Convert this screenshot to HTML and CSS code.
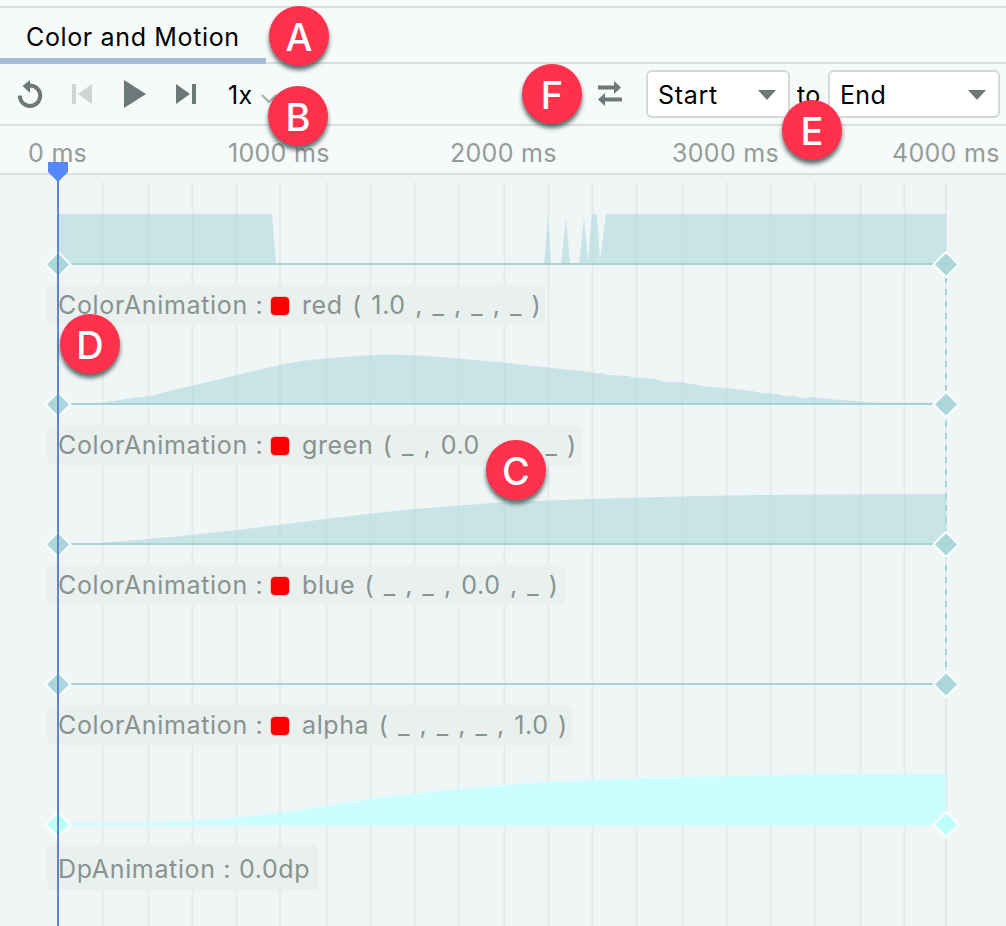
FILE: index.html
```html
<!DOCTYPE html>
<html lang="en">
<head>
    <meta charset="UTF-8">
    <meta name="viewport" content="width=device-width, initial-scale=1.0">
    <title>Animation Preview</title>
    <link rel="stylesheet" href="styles.css">
</head>
<body>
<div class="preview">
    <div class="tabs">
        <div class="tab active"><span class="tab-name">Color and Motion</span></div>
    </div>

    <div class="toolbar">
        <svg class="icon-loop" width="26" height="28" viewBox="0 0 26 28">
            <path d="M2.800 15.500A10.200 10.200 0 1 0 13 5.500" fill="none" stroke="#6c7978" stroke-width="4"/>
            <path d="M13 0v13L5.500 6z" fill="#6c7978"/>
        </svg>
        <svg class="icon-first" width="22" height="22" viewBox="0 0 22 22">
            <path d="M1 1h4v20H1zM21 1v20L7 11z" fill="#cfd5d4"/>
        </svg>
        <svg class="icon-play" width="22" height="28" viewBox="0 0 22 28">
            <path d="M0 0l22 14L0 28z" fill="#6c7978"/>
        </svg>
        <svg class="icon-last" width="20" height="20" viewBox="0 0 20 20">
            <path d="M0 0l14 10L0 20zM16 0h4v20h-4z" fill="#6c7978"/>
        </svg>
        <span class="speed">1x</span>
        <svg class="icon-chevron" width="16" height="10" viewBox="0 0 16 10">
            <path d="M1 1l7 7 7-7" fill="none" stroke="#9db8b2" stroke-width="2.4"/>
        </svg>
        <svg class="icon-swap" width="26" height="26" viewBox="0 0 26 26">
            <path d="M1 4.500h16V0l7 6.500-7 6.500V8.500H1zM25 16.500H8V12l-7 6.500L8 25v-4.500h17z" fill="#6c7978"/>
        </svg>
        <div class="select select-start"><span>Start</span><i class="arrow"></i></div>
        <span class="to">to</span>
        <div class="select select-end"><span>End</span><i class="arrow"></i></div>
    </div>

    <div class="ruler">
        <span>0 ms</span>
        <span>1000 ms</span>
        <span>2000 ms</span>
        <span>3000 ms</span>
        <span>4000 ms</span>
    </div>

    <div class="timeline">
        <svg class="grid" width="1006" height="751">
            <path d="M102.500 7V751M148.500 7V751M192.500 7V751M236.500 7V751M280 7V751M326.500 7V751M370.500 7V751M414.500 7V751M458.500 7V751M504.500 7V751M548.500 7V751M592.500 7V751M636.500 7V751M682.500 7V751M726.500 7V751M770.500 7V751M814.500 7V751M860.500 7V751M904.500 7V751M946 7V751"/>
            <path class="end-line" d="M946 102V510"/>
        </svg>

        <div class="row">
            <svg class="curve" width="1006" height="100">
                <path class="area" d="M58 79V29H272L276 79H544L548 31L551 79H561L566 32L570 79H579L584 33L588 76L592 29H597L600 76L606 29H946V79z"/>
                <path class="base" d="M70 79H934"/>
                <path class="key" d="M58 67l12.500 12.500L58 92 45.500 79.500zM946 67l12.500 12.500L946 92 933.500 79.500z"/>
            </svg>
            <div class="label label-red"><span class="name">ColorAnimation :</span><i class="swatch"></i><span class="value">red ( 1.0 , _ , _ , _ )</span></div>
        </div>

        <div class="row">
            <svg class="curve" width="1006" height="100">
                <path class="area" d="M58 79L101 77.700 134 72.700 151 71 173 65 191 61 237 50 280 40 301 36 326 33.500 369 30.300 387 29.500 414 30.300 459 33.500 505 37.700 548 42.500 592 47.300 597 48.800 603 48 608 50 628 51 634 52.500 655 54 664 57 682 57.300 706 61.500 726 63 752 66 763 68.500 770 68.300 777 69 787 71.500 793 70.500 803 73.500 810 72 837 74.700 880 77.700 946 77.700V79z"/>
                <path class="base" d="M70 79H934"/>
                <path class="key" d="M58 67l12.500 12.500L58 92 45.500 79.500zM946 67l12.500 12.500L946 92 933.500 79.500z"/>
            </svg>
            <div class="label label-green"><span class="name">ColorAnimation :</span><i class="swatch"></i><span class="value">green ( _ , 0.0 , _ , _ )</span></div>
        </div>

        <div class="row">
            <svg class="curve" width="1006" height="100">
                <path class="area" d="M58 79L101 77.700 148 74 191 70 237 65 280 59.700 326 54 369 48.700 414 44 459 40.500 505 37.300 548 35.500 590 34 640 32.500 700 31 770 30 815 29.500 946 29V79z"/>
                <path class="base" d="M70 79H934"/>
                <path class="key" d="M58 67l12.500 12.500L58 92 45.500 79.500zM946 67l12.500 12.500L946 92 933.500 79.500z"/>
            </svg>
            <div class="label label-blue"><span class="name">ColorAnimation :</span><i class="swatch"></i><span class="value">blue ( _ , _ , 0.0 , _ )</span></div>
        </div>

        <div class="row">
            <svg class="curve" width="1006" height="100">
                <path class="base" d="M70 79H934"/>
                <path class="key" d="M58 67l12.500 12.500L58 92 45.500 79.500zM946 67l12.500 12.500L946 92 933.500 79.500z"/>
            </svg>
            <div class="label label-alpha"><span class="name">ColorAnimation :</span><i class="swatch"></i><span class="value">alpha ( _ , _ , _ , 1.0 )</span></div>
        </div>

        <div class="row row-dp">
            <svg class="curve" width="1006" height="100">
                <path class="area" d="M58 77.700H148L191 76 237 72.700 280 68 326 61 369 54 414 48.700 459 43.700 505 40 548 37 590 35 640 33 700 31.500 770 30.300 840 29 946 29V80.500H58z"/>
                <path class="key" d="M58 67l12.500 12.500L58 92 45.500 79.500zM946 67l12.500 12.500L946 92 933.500 79.500z"/>
            </svg>
            <div class="label label-dp"><span class="name">DpAnimation : 0.0dp</span></div>
        </div>
    </div>

    <svg class="playhead" width="20" height="764">
        <path d="M10 14V764" stroke="#5f87d0" stroke-width="2"/>
        <path d="M0 0h20v10L10 20 0 10z" fill="#5688fa"/>
    </svg>

    <div class="badge badge-a">A</div>
    <div class="badge badge-b">B</div>
    <div class="badge badge-c">C</div>
    <div class="badge badge-d">D</div>
    <div class="badge badge-e">E</div>
    <div class="badge badge-f">F</div>
</div>
</body>
</html>
```
FILE: styles.css
```css
* {
    box-sizing: border-box;
}

body {
    margin: 0;
    font-family: Inter, "Liberation Sans", sans-serif;
    font-size: 25px;
    letter-spacing: 0.3px;
    color: #000;
    background-color: #f6faf9;
}

svg {
    display: block;
    flex: none;
}

.preview {
    position: relative;
    width: 1006px;
    height: 926px;
    overflow: hidden;
}

/* tabs */
.tabs {
    display: flex;
    height: 64px;
    padding-top: 6px;
    background: linear-gradient(#d9dfde, #d9dfde) 0 6px / 100% 2px no-repeat;
    border-bottom: 2px solid #d9dfde;
}

.tab {
    width: 266px;
    height: 58px;
    padding-left: 26px;
    line-height: 63px;
    white-space: nowrap;
}

.tab.active {
    border-bottom: 6px solid #a5bdd5;
}

.tab-name {
    letter-spacing: 0.64px;
}

/* toolbar */
.toolbar {
    display: flex;
    align-items: center;
    height: 62px;
    padding: 0 6px 0 17px;
    border-bottom: 2px solid #d9dfde;
}

.icon-first {
    margin-left: 28px;
}

.icon-play {
    margin-left: 31px;
}

.icon-last {
    margin-left: 30px;
}

.speed {
    width: 30px;
    margin-left: 32px;
    padding-top: 2px;
}

.icon-chevron {
    margin-top: 9px;
    margin-left: 3px;
}

.icon-swap {
    margin-left: auto;
    margin-right: 23px;
}

.select {
    display: flex;
    align-items: center;
    justify-content: space-between;
    height: 48px;
    padding: 2px 12px 0 10px;
    border: 2px solid #d3d9d8;
    border-radius: 6px;
    background-color: #fff;
}

.select-start {
    width: 144px;
    letter-spacing: 0.7px;
}

.select-end {
    width: 172px;
}

.arrow {
    border: 9px solid transparent;
    border-top: 10px solid #6c7978;
    border-bottom: 0;
}

.to {
    width: 38px;
    padding-top: 2px;
    padding-left: 7px;
}

/* ruler */
.ruler {
    display: grid;
    grid-template-columns: 200px 222px 222px 220px 114px;
    height: 49px;
    padding-left: 28px;
    line-height: 54px;
    letter-spacing: 0.3px;
    color: #929d9b;
    border-bottom: 2px solid #d9dfde;
    white-space: nowrap;
}

/* timeline */
.timeline {
    position: relative;
    height: 751px;
    padding-top: 10px;
    background-color: #f0f6f6;
}

.grid {
    position: absolute;
    left: 0;
    top: 0;
    fill: none;
    stroke: #e4ebea;
    stroke-width: 2;
}

.end-line {
    stroke: #a5d2ce;
    stroke-dasharray: 6 6;
}

.row {
    position: relative;
}

.area {
    fill: #b0d8dd;
    fill-opacity: 0.62;
}

.base {
    stroke: #a7d3d7;
    stroke-width: 2;
}

.key {
    fill: #abd6da;
    stroke: #fafdfd;
    stroke-width: 2;
}

.row-dp .area {
    fill: #ccfeff;
    fill-opacity: 1;
}

.row-dp .key {
    fill: #bffffa;
}

.label {
    display: flex;
    align-items: center;
    height: 40px;
    margin-left: 47px;
    padding-left: 11px;
    border-radius: 6px;
    background-color: #e9f0ee;
    color: #879391;
    letter-spacing: 0.65px;
    white-space: pre;
}

.name {
    width: 213px;
}

.value {
    letter-spacing: 0.6px;
    word-spacing: 1.85px;
}

.swatch {
    width: 18px;
    height: 18px;
    margin-top: 1px;
    margin-right: 13px;
    border-radius: 4px;
    background-color: #f00;
    box-shadow: 0 0 0 1px #e8c4c0;
}

.label-red {
    width: 498px;
}

.label-green {
    width: 535px;
}

.label-blue {
    width: 518px;
}

.label-alpha {
    width: 525px;
}

.label-dp {
    width: 272px;
    height: 45px;
    padding-top: 2px;
}

.playhead {
    position: absolute;
    left: 48px;
    top: 162px;
}

/* callouts */
.badge {
    position: absolute;
    width: 60px;
    height: 60px;
    border-radius: 50%;
    background-color: #ff314c;
    color: #fff;
    font-size: 38px;
    font-weight: 500;
    line-height: 62px;
    letter-spacing: 0;
    text-align: center;
    box-shadow: 0 4px 4px rgba(50, 75, 75, 0.8);
}

.badge-a {
    left: 269px;
    top: 6px;
}

.badge-b {
    left: 268px;
    top: 86px;
}

.badge-c {
    left: 486px;
    top: 440px;
}

.badge-d {
    left: 60px;
    top: 314px;
}

.badge-e {
    left: 782px;
    top: 100px;
}

.badge-f {
    left: 522px;
    top: 64px;
}
```
